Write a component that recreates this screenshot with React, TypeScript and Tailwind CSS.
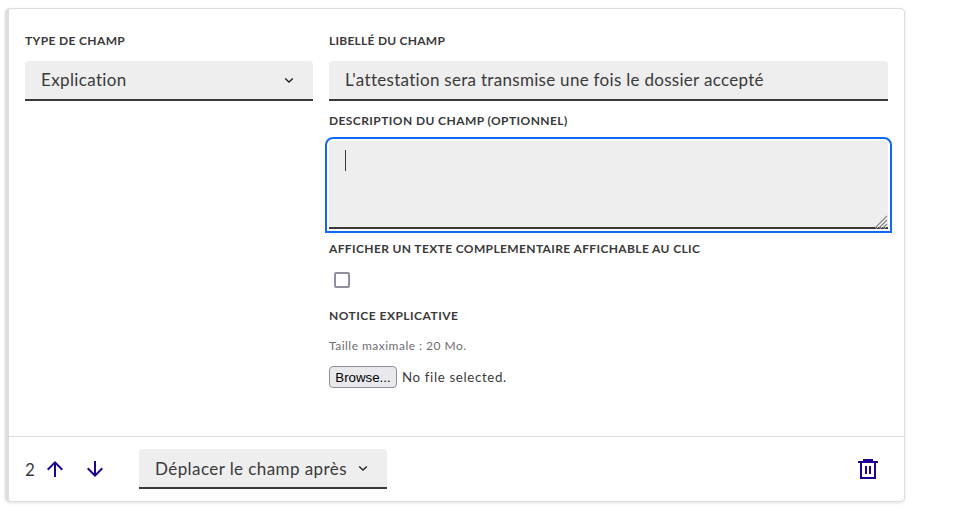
import type { ReactNode } from 'react';

function Label({ children, tracking }: { children: ReactNode; tracking: string }) {
  return (
    <div className={`h-5 whitespace-nowrap text-[12px] leading-5 font-bold uppercase ${tracking}`}>{children}</div>
  );
}

function Chevron() {
  return (
    <svg width="16" height="16" viewBox="0 0 16 16" fill="none" className="shrink-0">
      <path d="M4.2 6.6 8 10.1l3.8-3.5" stroke="#222222" strokeWidth="1.4" />
    </svg>
  );
}

function ArrowUp() {
  return (
    <svg width="24" height="24" viewBox="0 0 24 24" fill="#1f0093">
      <path d="M4 12l1.41 1.41L11 7.83V20h2V7.83l5.58 5.59L20 12l-8-8-8 8z" />
    </svg>
  );
}

function ArrowDown() {
  return (
    <svg width="24" height="24" viewBox="0 0 24 24" fill="#1f0093">
      <path d="M20 12l-1.41-1.41L13 16.17V4h-2v12.17l-5.58-5.59L4 12l8 8 8-8z" />
    </svg>
  );
}

function Trash() {
  return (
    <svg width="20" height="20" viewBox="0 0 20 20" fill="#1f0093" shapeRendering="crispEdges">
      <path fillRule="evenodd" d="M5 0h10v2h5v2h-2v16H2V4H0V2h5zM4 4v14h12V4zM7 7h2v8H7zM11 7h2v8h-2z" />
    </svg>
  );
}

function Grip() {
  return (
    <svg width="13" height="14" viewBox="0 0 13 14" fill="none" className="absolute right-0 -bottom-[2px]">
      <path d="M1.5 13.5 12.5 2.5M5.5 13.5l7-7M9.5 13.5l3-3" stroke="#ffffff" strokeWidth=".8" />
      <path d="M0 13 12 1M4 13l8-8M8 13l4-4" stroke="#858585" strokeWidth="1.2" />
    </svg>
  );
}

export default function App() {
  return (
    <div className="h-[511px] w-[954px] bg-white pt-2 pl-[5px] font-['Lato','Noto_Sans',sans-serif] text-[#3a3a3a]">
      <section className="flex h-[494px] w-[900px] flex-col rounded-[5px] border border-l-4 border-[#dddddd] bg-white shadow-[0_1px_3px_rgba(0,0,0,0.12)]">
        <div className="flex h-[427px] gap-4 pt-[22px] pr-4 pl-4">
          <div className="w-[288px]">
            <Label tracking="tracking-[0.36px]">Type de champ</Label>
            <div className="mt-[10px] flex h-10 items-center justify-between rounded-t border-b-2 border-[#3a3a3a] bg-[#eeeeee] px-4">
              <span className="text-[17px] leading-6 tracking-[0.36px]">Explication</span>
              <Chevron />
            </div>
          </div>
          <div className="w-[559px]">
            <Label tracking="tracking-[0.25px]">Libellé du champ</Label>
            <div className="mt-[10px] flex h-10 items-center rounded-t border-b-2 border-[#3a3a3a] bg-[#eeeeee] px-4">
              <span className="whitespace-nowrap text-[17px] leading-6 tracking-[0.295px]">
                L'attestation sera transmise une fois le dossier accepté
              </span>
            </div>
            <div className="mt-[10px]">
              <Label tracking="tracking-[0.42px]">Description du champ (optionnel)</Label>
            </div>
            <div className="relative mt-[10px] h-[88px] rounded-t border-b-2 border-[#3a3a3a] bg-[#eeeeee] px-4 pt-[9px] outline-2 outline-offset-2 outline-[#1268f3]">
              <div className="h-[21px] w-px bg-[#3a3a3a]" />
              <Grip />
            </div>
            <div className="mt-[10px]">
              <Label tracking="tracking-[0.37px]">Afficher un texte complementaire affichable au clic</Label>
            </div>
            <div className="mt-[13px] ml-[5px] size-4 rounded-[2px] border-2 border-[#8f8f9d] bg-white" />
            <div className="mt-[18px]">
              <Label tracking="tracking-[0.48px]">Notice explicative</Label>
            </div>
            <div className="mt-[10px] h-5 text-[12px] leading-5 tracking-[0.48px] text-[#6e6e6e]">
              Taille maximale : 20 Mo.
            </div>
            <div className="mt-[10px] flex h-[22px] items-center gap-[5px]">
              <button className="h-[22px] w-[68px] rounded border border-[#8f8f9d] bg-[#e9e9ed] pt-px text-center font-['Liberation_Sans',sans-serif] text-[13.3px] leading-[19px] text-black">
                Browse...
              </button>
              <span className="pt-0.5 text-[13.3px] tracking-[0.64px]">No file selected.</span>
            </div>
          </div>
        </div>
        <div className="flex h-[65px] items-center border-t border-[#dddddd] pr-[26px] pl-4">
          <span className="w-[18px] pt-px text-[17px]">2</span>
          <div className="flex gap-4">
            <ArrowUp />
            <ArrowDown />
          </div>
          <div className="ml-8 flex h-10 w-[248px] items-center justify-between rounded-t border-b-2 border-[#3a3a3a] bg-[#eeeeee] px-4">
            <span className="pt-0.5 whitespace-nowrap text-[17px] leading-6 tracking-[0.42px]">Déplacer le champ après</span>
            <Chevron />
          </div>
          <div className="ml-auto">
            <Trash />
          </div>
        </div>
      </section>
    </div>
  );
}
